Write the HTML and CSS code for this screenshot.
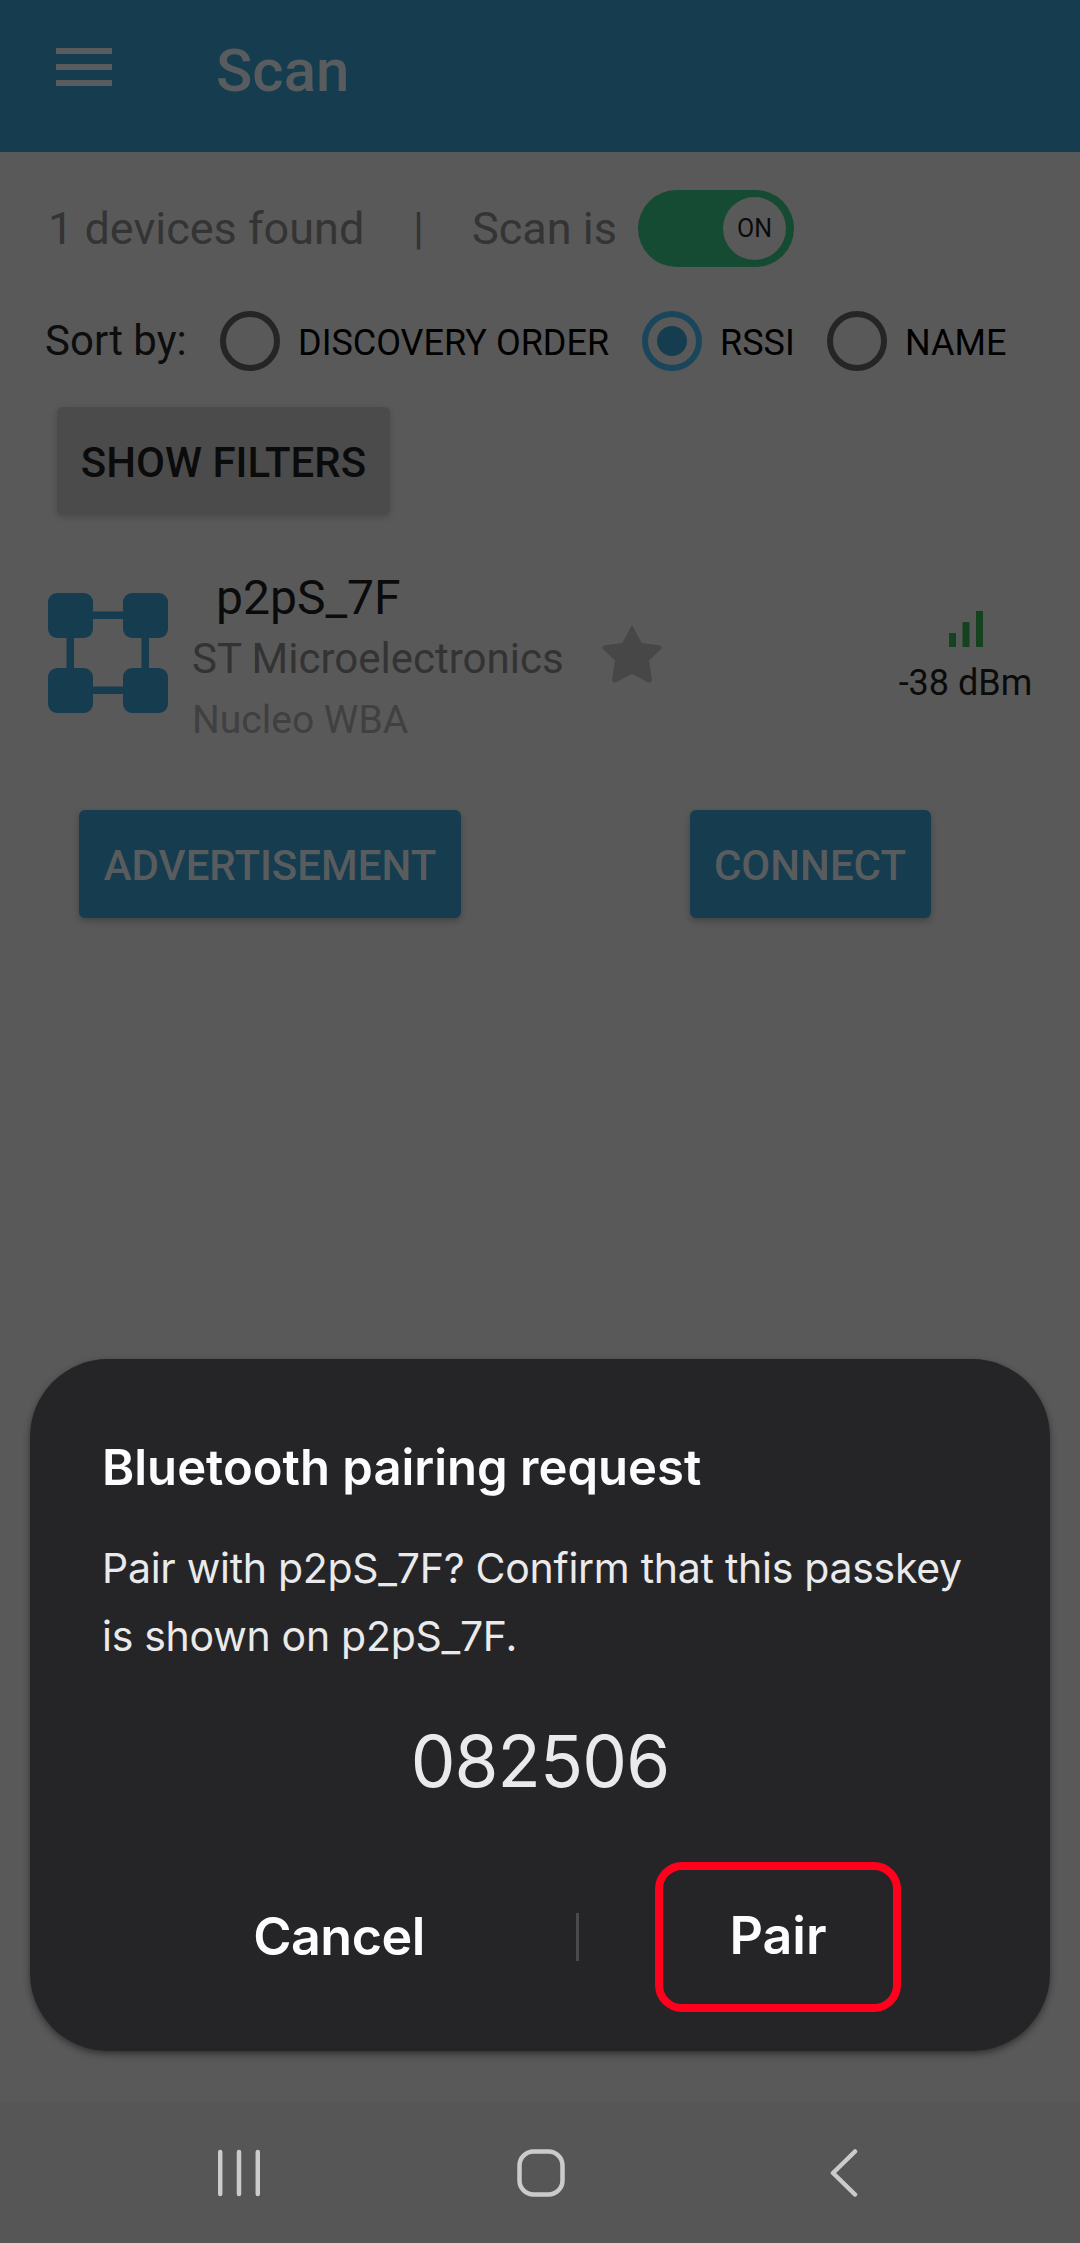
FILE: index.html
```html
<!DOCTYPE html>
<html lang="en">
<head>
<meta charset="utf-8">
<title>Scan</title>
<link rel="stylesheet" href="styles.css">
</head>
<body>
<div class="screen">
  <header class="app-bar">
    <svg class="menu" width="56" height="38" viewBox="0 0 56 38"><path d="M0 0h56v6H0zM0 16h56v6H0zM0 32h56v6H0z" fill="#595c5e"/></svg>
    <h1 class="title">Scan</h1>
  </header>

  <main class="content">
    <div class="status">
      <span class="found">1 devices found</span>
      <span class="bar">|</span>
      <span class="scan-is">Scan is</span>
      <span class="toggle"><span class="knob">ON</span></span>
    </div>

    <div class="sort">
      <span class="sort-label">Sort by:</span>
      <span class="radio"></span><span class="option discovery">DISCOVERY ORDER</span>
      <span class="radio selected"></span><span class="option rssi">RSSI</span>
      <span class="radio"></span><span class="option">NAME</span>
    </div>

    <button class="button filters">SHOW FILTERS</button>

    <section class="device">
      <svg class="node" width="120" height="120" viewBox="0 0 120 120" fill="#163d4f">
        <rect width="45" height="45" rx="9"/><rect x="75" width="45" height="45" rx="9"/>
        <rect y="75" width="45" height="45" rx="9"/><rect x="75" y="75" width="45" height="45" rx="9"/>
        <path d="M44 18.5h32v7.5H44zM44 93.5h32v7.500H44zM18.500 44h7.500v32h-7.500zM93.500 44h7.500v32h-7.500z"/>
      </svg>
      <div class="info">
        <div class="name">p2pS_7F</div>
        <div class="vendor">ST Microelectronics</div>
        <div class="board">Nucleo WBA</div>
      </div>
      <svg class="star" width="62" height="60" viewBox="0 0 62 60"><path d="M31 2L40.500 19.500L59 22Q61 23 59.500 25L47.500 36.500L50.500 56Q50 59 47.500 58L31 49.500L14.500 58Q12 59 11.500 56L14.500 36.500L2.500 25Q1 23 3 22L21.500 19.500Z" fill="#474747" stroke="#474747" stroke-linejoin="round"/></svg>
      <div class="signal">
        <svg width="34" height="36" viewBox="0 0 34 36"><path d="M0 22h7v14H0zM13.500 11h7v25h-7zM27 0h7v36h-7z" fill="#15431f"/></svg>
        <span class="dbm">-38 dBm</span>
      </div>
    </section>

    <div class="actions">
      <button class="button advertisement">ADVERTISEMENT</button>
      <button class="button connect">CONNECT</button>
    </div>
  </main>

  <section class="dialog">
    <h2 class="dialog-title">Bluetooth pairing request</h2>
    <p class="message">Pair with p2pS_7F? Confirm that this passkey<br>is shown on p2pS_7F.</p>
    <div class="passkey">082506</div>
    <div class="choices">
      <span class="cancel">Cancel</span>
      <span class="divider"></span>
      <span class="pair">Pair</span>
    </div>
  </section>

  <nav class="nav">
    <svg class="recents" width="42" height="48" viewBox="0 0 42 48"><path d="M2.200 3v42M21 3v42M39.800 3v42"/></svg>
    <svg class="home" width="48" height="48" viewBox="0 0 48 48"><rect x="2.500" y="2.500" width="43" height="43" rx="14"/></svg>
    <svg class="back" width="30" height="48" viewBox="0 0 30 48"><path d="M26 2.500L4 24L26 45.500"/></svg>
  </nav>
</div>
</body>
</html>
```
FILE: styles.css
```css
* { box-sizing: border-box; }
body { margin: 0; }
.screen {
  width: 1080px;
  height: 2243px;
  display: flex;
  flex-direction: column;
  background: #595959;
  font-family: Roboto, sans-serif;
  white-space: nowrap;
  overflow: hidden;
}
.app-bar {
  flex: none;
  height: 152px;
  display: flex;
  align-items: flex-start;
  padding: 40px 0 0 56px;
  background: #163d4f;
}
.menu { margin-top: 8px; }
.title {
  margin: 1px 0 0 104px;
  font-size: 60px;
  line-height: 60px;
  font-weight: 500;
  color: #595c5e;
}
.content { flex: none; height: 1207px; padding-top: 38px; }

.status {
  display: flex;
  align-items: center;
  height: 77px;
  padding-left: 48px;
  font-size: 45px;
  line-height: 62px;
  color: #343434;
}
.found { width: 365px; padding-top: 1px; }
.bar { width: 59px; padding-top: 1px; }
.scan-is { width: 166px; padding-top: 1px; }
.toggle {
  width: 156px;
  height: 77px;
  display: flex;
  justify-content: flex-end;
  align-items: center;
  padding-right: 8px;
  border-radius: 39px;
  background: #164b33;
}
.knob {
  width: 63px;
  height: 63px;
  border-radius: 50%;
  background: #595959;
  color: #0b0b0b;
  font-size: 25px;
  line-height: 64px;
  text-align: center;
}

.sort {
  display: flex;
  align-items: center;
  height: 60px;
  margin-top: 44px;
  padding-left: 45px;
  color: #000;
}
.sort-label { width: 175px; font-size: 42px; line-height: 60px; color: #0d0d0d; }
.radio {
  flex: none;
  width: 60px;
  height: 60px;
  border: 6px solid #252525;
  border-radius: 50%;
  margin-right: 18px;
}
.radio.selected {
  border-color: #1a465b;
  background: radial-gradient(circle, #163d4f 14.500px, transparent 15.500px);
}
.option { font-size: 36px; line-height: 60px; padding-top: 3px; }
.discovery { width: 344px; }
.rssi { width: 107px; }

.button {
  display: block;
  height: 108px;
  padding: 3px 0 0;
  border: 0;
  border-radius: 6px;
  font: 500 42px/60px Roboto, sans-serif;
  text-align: center;
  background: #163d4f;
  color: #595c5e;
  box-shadow: 0 3px 6px rgba(0, 0, 0, .25);
}
.filters {
  width: 333px;
  margin: 36px 0 0 57px;
  background: #4b4b4b;
  color: #0b0b0b;
  box-shadow: 0 2px 6px rgba(0, 0, 0, .18);
}

.device {
  display: flex;
  align-items: flex-start;
  height: 190px;
  margin-top: 53px;
  padding-left: 48px;
}
.node { flex: none; margin-top: 25px; }
.info { width: 411px; padding-left: 24px; line-height: 60px; }
.name { font-size: 48px; padding-left: 24px; color: #0b0b0b; }
.vendor { font-size: 42px; line-height: 62px; color: #333; }
.board { font-size: 39px; color: #404040; }
.star { flex: none; margin: 56px 0 0 22px; }
.signal {
  display: flex;
  flex-direction: column;
  align-items: center;
  width: 160px;
  margin: 43px 0 0 223px;
}
.dbm { margin: 6px 1px 0 0; font-size: 36px; line-height: 60px; color: #0b0b0b; }

.actions { display: flex; margin-top: 52px; padding-left: 79px; }
.advertisement { width: 382px; }
.connect { width: 241px; margin-left: 229px; padding-right: 1px; }

.dialog {
  flex: none;
  width: 1020px;
  height: 692px;
  margin: 0 30px 51px;
  padding-top: 79px;
  border-radius: 78px;
  background: #252527;
  box-shadow: 0 3px 7px rgba(0, 0, 0, .45);
  font-family: Inter, sans-serif;
  color: #fcfcff;
}
.dialog-title {
  margin: 0 0 0 72px;
  font-size: 49px;
  line-height: 60px;
  font-weight: 600;
}
.message {
  margin: 36px 0 0 72px;
  font-size: 41px;
  line-height: 68px;
  letter-spacing: -.28px;
  color: #eaeaec;
}
.passkey {
  margin-top: 46px;
  font-size: 71px;
  line-height: 90px;
  letter-spacing: -.9px;
  text-align: center;
  color: #eaeaec;
}
.choices {
  display: flex;
  align-items: center;
  height: 150px;
  margin-top: 56px;
  font-size: 52px;
  font-weight: 600;
}
.cancel { width: 418px; margin-left: 100px; letter-spacing: -.5px; text-align: center; padding-bottom: 2px; }
.divider { width: 3px; height: 48px; margin-left: 28px; background: #4b4b4d; }
.pair {
  width: 246px;
  height: 150px;
  margin-left: 76px;
  border: 8px solid #ff001d;
  border-radius: 27px;
  line-height: 132px;
  text-align: center;
}

.nav {
  flex: none;
  height: 141px;
  display: flex;
  padding: 47px 0 0 218px;
  background: #565656;
}
.nav svg { fill: none; stroke: #cbcbcb; stroke-width: 4.500; stroke-linecap: round; stroke-linejoin: round; }
.home { margin-left: 257px; }
.back { margin-left: 264px; }
```
